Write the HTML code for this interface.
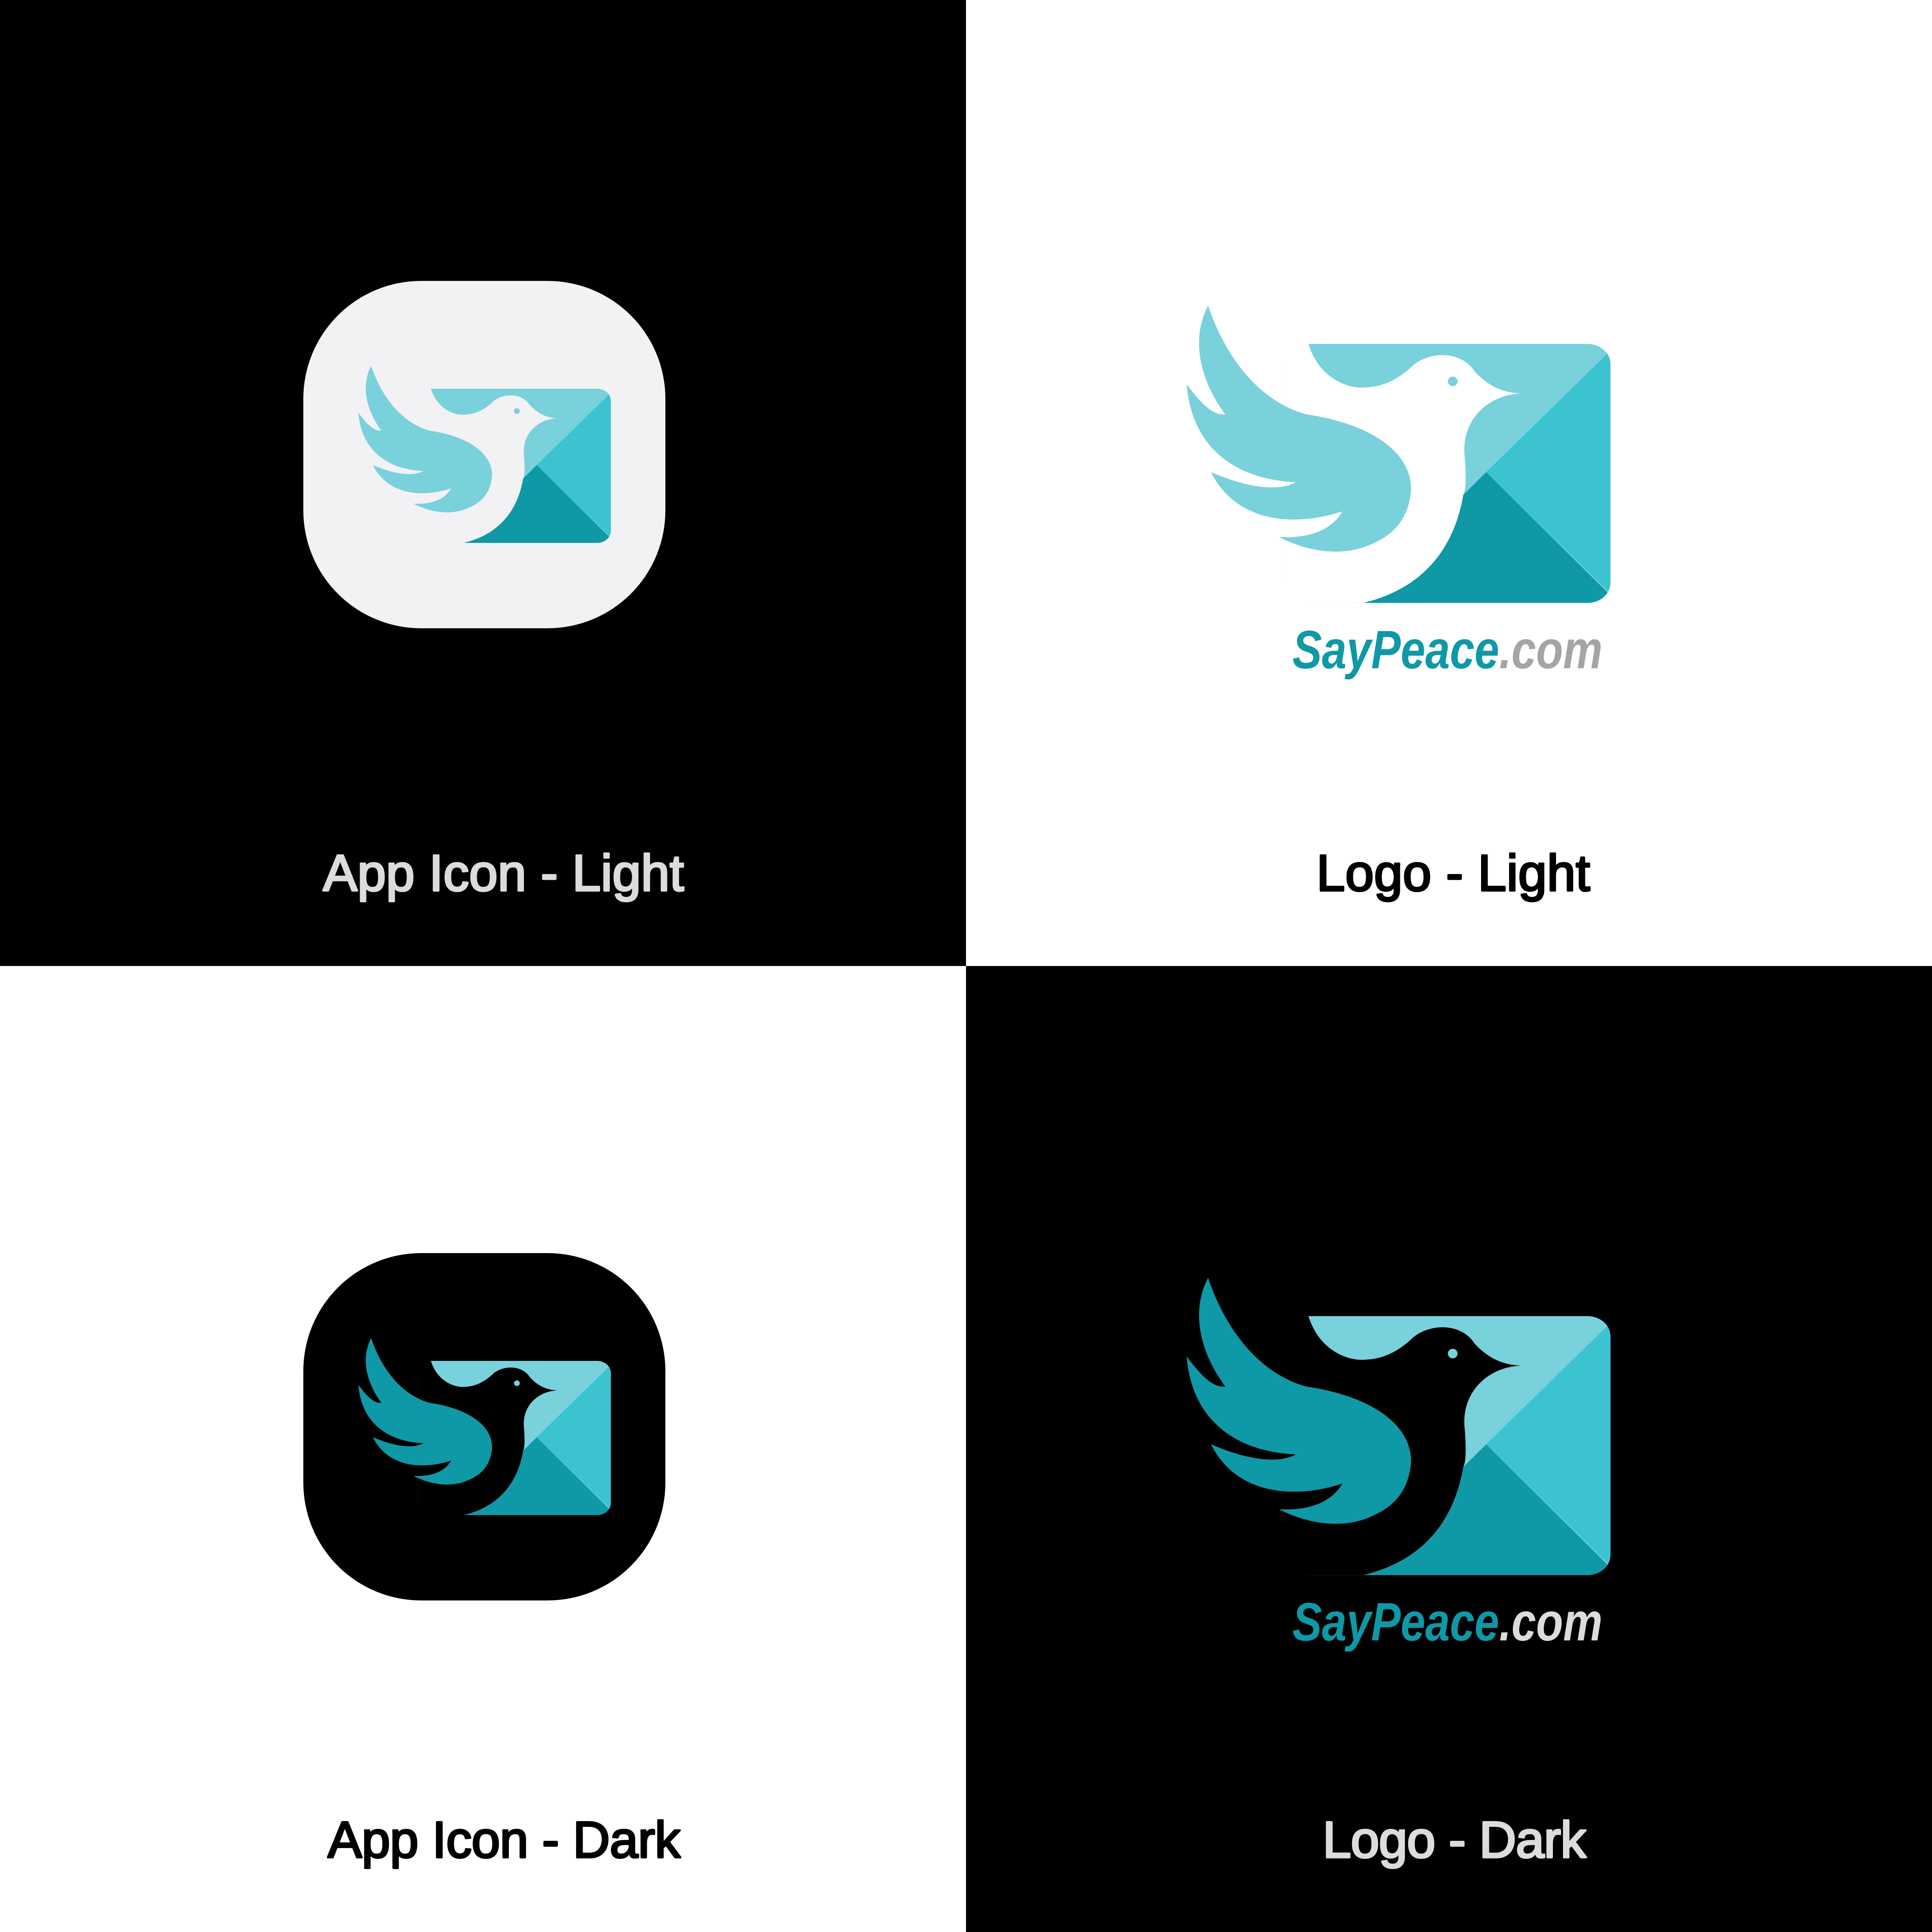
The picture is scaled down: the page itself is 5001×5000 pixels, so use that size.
<!DOCTYPE html>
<html><head><meta charset="utf-8"><style>
html,body{margin:0;padding:0;background:#fff}
svg{display:block}
.body{fill:var(--body)}
.wing{fill:var(--wing)}
.eye{fill:#79D1DC}
</style></head><body>
<svg width="5001" height="5000" viewBox="0 0 5001 5000" xmlns="http://www.w3.org/2000/svg">
<defs>
<clipPath id="env"><rect x="390" y="200" width="1135" height="1030" rx="80" ry="80"/></clipPath>
<g id="mark">
  <g clip-path="url(#env)">
    <rect x="380" y="190" width="1160" height="1050" fill="#79D1DC"/>
    <polygon points="1540,210 1090,710 1540,1210" fill="#3CC3D0"/>
    <polygon points="630,1230 1090,710 1525,1200 1540,1240 600,1240" fill="#0F98A6"/>
  </g>
  <path class="body" d="M468,200 C510,350 620,380 670,373 C740,370 790,330 825,295 C880,230 1000,220 1050,310 C1100,370 1150,395 1215,397 C1100,400 1000,500 1015,650 C1020,720 1020,780 1010,800 C980,1000 880,1170 660,1230 L470,1230 Q390,1230 390,1150 L390,280 Q390,200 468,200 Z"/>
  <ellipse class="eye" cx="973" cy="349" rx="17" ry="19"/>
  <path class="wing" d="M117,48 C180,260 300,430 460,480 C700,520 830,640 827,780 C820,900 760,960 700,990 C600,1050 470,1030 365,968 C470,975 550,940 587,866 C430,925 220,920 127,710 C250,770 360,790 424,750 C220,740 60,620 42,360 C100,450 140,485 177,480 C80,330 60,170 117,48 Z"/>
</g>
</defs>

<rect x="0" y="0" width="2500" height="2500" fill="#000"/>
<rect x="2500" y="0" width="2501" height="2500" fill="#fff"/>
<rect x="0" y="2500" width="2500" height="2500" fill="#fff"/>
<rect x="2500" y="2500" width="2501" height="2500" fill="#000"/>

<rect x="785" y="727" width="937" height="899" rx="305" ry="305" fill="#F2F2F4"/>
<g transform="translate(909,928.5) scale(0.4405,0.3874)" style="--body:#F2F2F4;--wing:#79D1DC"><use href="#mark"/></g>

<rect x="785" y="3243" width="937" height="899" rx="305" ry="305" fill="#000"/>
<g transform="translate(909,3444.5) scale(0.4405,0.3874)" style="--body:#000;--wing:#0F98A6"><use href="#mark"/></g>

<g transform="translate(3040,760) scale(0.7396,0.6506)" style="--body:#fff;--wing:#79D1DC">
  <use href="#mark"/>
  <text x="412" y="1490" font-family="Liberation Sans, sans-serif" font-weight="bold" font-style="italic" font-size="215" textLength="1085" lengthAdjust="spacingAndGlyphs"><tspan fill="#0F98A6">SayPeace</tspan><tspan fill="#A7A4A6">.com</tspan></text>
</g>

<g transform="translate(3040,3276) scale(0.7396,0.6506)" style="--body:#000;--wing:#0F98A6">
  <use href="#mark"/>
  <text x="412" y="1490" font-family="Liberation Sans, sans-serif" font-weight="bold" font-style="italic" font-size="215" textLength="1085" lengthAdjust="spacingAndGlyphs"><tspan fill="#0F98A6">SayPeace</tspan><tspan fill="#DCDCDC">.com</tspan></text>
</g>

<g font-family="Liberation Sans, sans-serif" font-size="133" lengthAdjust="spacingAndGlyphs" stroke-width="5" stroke-linejoin="round">
<text x="836" y="2305" textLength="934" fill="#DCDCDC" stroke="#DCDCDC">App Icon - Light</text>
<text x="3407" y="2305" textLength="708" fill="#000" stroke="#000">Logo - Light</text>
<text x="848" y="4807" textLength="913" fill="#000" stroke="#000">App Icon - Dark</text>
<text x="3423" y="4807" textLength="682" fill="#DCDCDC" stroke="#DCDCDC">Logo - Dark</text>
</g>
</svg>
</body></html>
